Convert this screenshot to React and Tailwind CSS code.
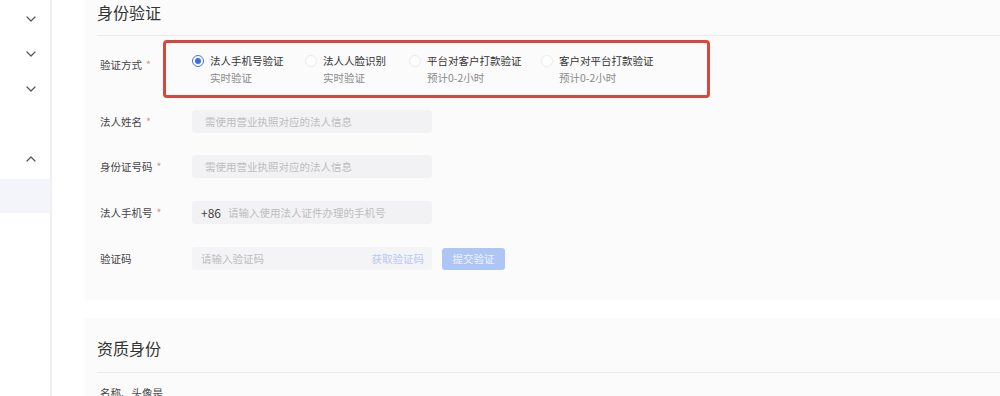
import React from 'react';

const FONT = { fontFamily: '"Noto Sans CJK SC", "Noto Sans", sans-serif' };

const METHODS = [
  { title: '法人手机号验证', sub: '实时验证', checked: true, w: 'w-[113px]' },
  { title: '法人人脸识别', sub: '实时验证', w: 'w-[104px]' },
  { title: '平台对客户打款验证', sub: '预计0-2小时', w: 'w-[132px]' },
  { title: '客户对平台打款验证', sub: '预计0-2小时', w: 'w-[130px]' },
];

function Chevron({ up }) {
  return (
    <svg width="10" height="6" viewBox="0 0 10 6" fill="none" stroke="#555" strokeWidth="1.2" strokeLinecap="round" strokeLinejoin="round">
      {up ? <path d="M1 5 L5 1 L9 5" /> : <path d="M1 1 L5 5 L9 1" />}
    </svg>
  );
}

function Label({ children, required }) {
  return (
    <div className="w-[92px] shrink-0 text-[10.5px] leading-[18px] text-[#444]">
      {children}
      {required && <span className="ml-[4px] text-[#e58a8a]">*</span>}
    </div>
  );
}

function Radio({ checked }) {
  return checked ? (
    <span className="mt-[3px] w-[12px] h-[12px] rounded-full border border-[#4a76e0] flex items-center justify-center shrink-0">
      <span className="w-[6px] h-[6px] rounded-full bg-[#3d6be0]" />
    </span>
  ) : (
    <span className="mt-[3px] w-[12px] h-[12px] rounded-full border border-[#ebebed] bg-white shrink-0" />
  );
}

function Field({ label, required, children, className = '' }) {
  return (
    <div className={`flex items-center pl-[3px] ${className}`}>
      <Label required={required}>{label}</Label>
      {children}
    </div>
  );
}

export default function App() {
  return (
    <div className="w-[1000px] h-[396px] overflow-hidden flex bg-white" style={FONT}>
      {/* Sidebar */}
      <div className="w-[52px] shrink-0 border-r-2 border-[#efefef] bg-white flex flex-col">
        <div className="h-[18px] shrink-0" />
        {[0, 1, 2].map((i) => (
          <div key={i} className="h-[35px] shrink-0 flex items-start justify-end pr-[14px]">
            <div className="-mt-[2px]"><Chevron /></div>
          </div>
        ))}
        <div className="mt-[24px] h-[24px] shrink-0 flex items-center justify-end pr-[14px]">
          <Chevron up />
        </div>
        <div className="mt-[8px] h-[34px] shrink-0 bg-[#f4f5fb]" />
      </div>

      {/* Main */}
      <div className="flex-1 pl-[33px] flex flex-col overflow-hidden">
        <div className="shrink-0 bg-[#fbfbfc] pl-[12px] pb-[30px]">
          <h2 className="h-[24px] leading-[24px] text-[16px] text-[#333] font-normal">身份验证</h2>
          <div className="mt-[11px] h-px bg-[#ebebeb]" />

          <div className="flex items-start pl-[3px] mt-[16px]">
            <div className="w-[92px] shrink-0 mt-[4px] text-[10.5px] leading-[18px] text-[#444]">
              验证方式<span className="ml-[4px] text-[#e58a8a]">*</span>
            </div>
            <div className="relative flex">
              <div className="absolute -left-[29px] -top-[12px] w-[547px] h-[58px] border-[3px] border-[#d9463e] rounded-[4px] pointer-events-none" />
              {METHODS.map((m) => (
                <div key={m.title} className={`flex items-start gap-[6px] ${m.w}`}>
                  <Radio checked={m.checked} />
                  <div>
                    <div className="text-[10.5px] leading-[18px] text-[#333]">{m.title}</div>
                    <div className="text-[10.5px] leading-[16px] text-[#8a8a8a]">{m.sub}</div>
                  </div>
                </div>
              ))}
            </div>
          </div>

          <Field label="法人姓名" required className="mt-[24px]">
            <div className="w-[240px] h-[23px] rounded-[3px] bg-[#f2f2f4] pl-[13px] flex items-center text-[10.5px] text-[#bdbdbd]">
              需使用营业执照对应的法人信息
            </div>
          </Field>

          <Field label="身份证号码" required className="mt-[22px]">
            <div className="w-[240px] h-[23px] rounded-[3px] bg-[#f2f2f4] pl-[13px] flex items-center text-[10.5px] text-[#bdbdbd]">
              需使用营业执照对应的法人信息
            </div>
          </Field>

          <Field label="法人手机号" required className="mt-[23px]">
            <div className="w-[240px] h-[23px] rounded-[3px] bg-[#f2f2f4] pl-[9px] flex items-center text-[10.5px]">
              <span className="text-[12px] text-[#444] mr-[7px]">+86</span>
              <span className="text-[#bdbdbd]">请输入使用法人证件办理的手机号</span>
            </div>
          </Field>

          <Field label="验证码" className="mt-[23px]">
            <div className="w-[240px] h-[23px] rounded-[3px] bg-[#f4f4f6] pl-[9px] pr-[8px] flex items-center justify-between text-[10.5px]">
              <span className="text-[#bdbdbd]">请输入验证码</span>
              <span className="text-[#b6c9f3]">获取验证码</span>
            </div>
            <button className="ml-[10px] w-[63px] h-[22px] rounded-[3px] bg-[#aec6f5] text-[#eef3fd] text-[10.5px]">提交验证</button>
          </Field>
        </div>

        <div className="h-[18px] shrink-0 bg-white" />

        <div className="shrink-0 bg-[#fbfbfc] pl-[12px] h-[120px]">
          <h2 className="mt-[18px] h-[24px] leading-[24px] text-[16px] text-[#333] font-normal">资质身份</h2>
          <div className="mt-[12px] h-px bg-[#ebebeb]" />
          <div className="mt-[11px] pl-[3px] text-[10.5px] leading-[18px] text-[#444]">名称、头像是</div>
        </div>
      </div>
    </div>
  );
}
